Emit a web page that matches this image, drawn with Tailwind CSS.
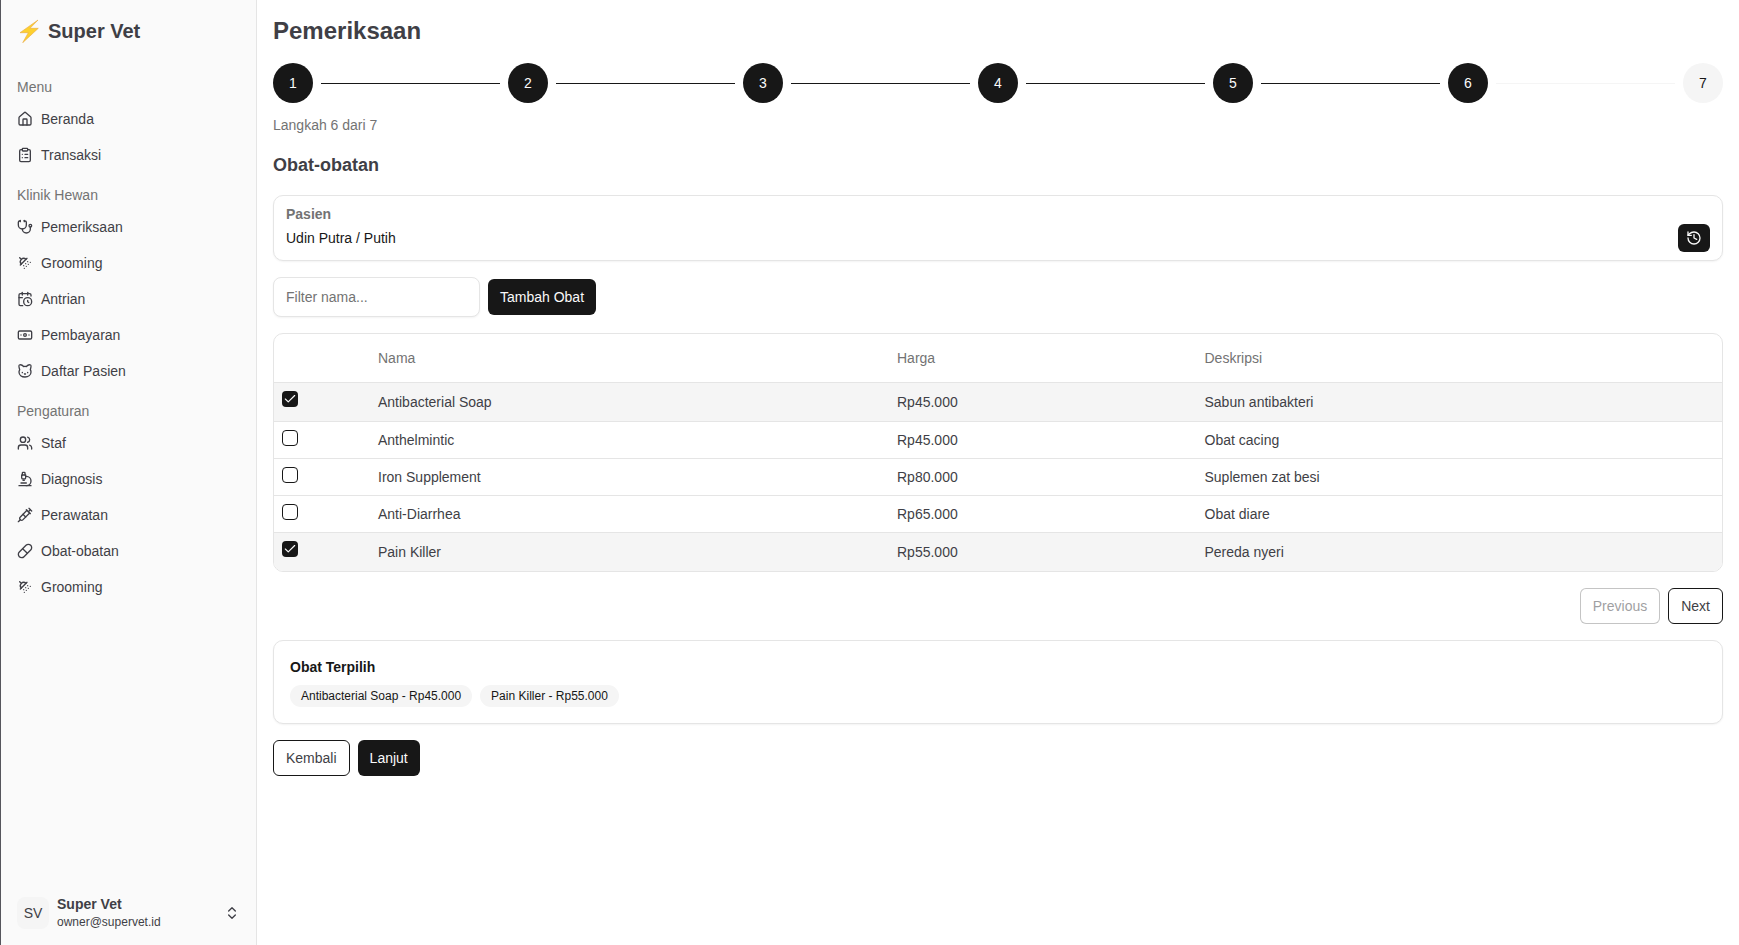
<!DOCTYPE html>
<html lang="en">
  <head>
    <meta charset="UTF-8" />
    <meta name="viewport" content="width=device-width, initial-scale=1.0" />
    <title>Super Vet - Pemeriksaan</title>
    <script src="https://cdn.jsdelivr.net/npm/@tailwindcss/browser@4"></script>
  </head>
  <body class="bg-white font-['Liberation_Sans',Arial,sans-serif] text-[#3f3f46]">
    <div class="flex h-[945px] overflow-hidden">
      <!-- sidebar -->
      <aside class="flex w-[257px] shrink-0 flex-col border-l border-r border-l-[#55555c] border-r-[#e5e5e5] bg-[#fafafa] pl-4 pr-2">
        <div class="flex h-[28px] mt-[17px] items-center gap-[6px] text-xl font-bold">
          <svg class="ml-px size-[24px]" viewBox="0 0 24 24">
            <polygon fill="#fdd02f" stroke="#e9a83f" stroke-width=".6" stroke-linejoin="round" points="20,1 2,13.7 10.3,13.7 4.7,23.7 20.3,9.3 12,9.3" />
          </svg>
          <span>Super Vet</span>
        </div>

        <p class="mt-[32px] h-[20px] text-sm leading-5 text-[#737373]">Menu</p>
        <nav class="mt-[4px] text-sm">
          <a class="flex h-[36px] items-center gap-2">
            <svg class="size-4" viewBox="0 0 24 24" fill="none" stroke="currentColor" stroke-width="2" stroke-linecap="round" stroke-linejoin="round"><path d="M15 21v-8a1 1 0 0 0-1-1h-4a1 1 0 0 0-1 1v8" /><path d="M3 10a2 2 0 0 1 .709-1.528l7-5.999a2 2 0 0 1 2.582 0l7 5.999A2 2 0 0 1 21 10v9a2 2 0 0 1-2 2H5a2 2 0 0 1-2-2z" /></svg>
            Beranda
          </a>
          <a class="flex h-[36px] items-center gap-2">
            <svg class="size-4" viewBox="0 0 24 24" fill="none" stroke="currentColor" stroke-width="2" stroke-linecap="round" stroke-linejoin="round"><rect width="8" height="4" x="8" y="2" rx="1" /><path d="M16 4h2a2 2 0 0 1 2 2v14a2 2 0 0 1-2 2H6a2 2 0 0 1-2-2V6a2 2 0 0 1 2-2h2" /><path d="M12 11h4" /><path d="M12 16h4" /><path d="M8 11h.01" /><path d="M8 16h.01" /></svg>
            Transaksi
          </a>
        </nav>

        <p class="mt-[12px] h-[20px] text-sm leading-5 text-[#737373]">Klinik Hewan</p>
        <nav class="mt-[4px] text-sm">
          <a class="flex h-[36px] items-center gap-2">
            <svg class="size-4" viewBox="0 0 24 24" fill="none" stroke="currentColor" stroke-width="2" stroke-linecap="round" stroke-linejoin="round"><path d="M11 2v2" /><path d="M5 2v2" /><path d="M5 3H4a2 2 0 0 0-2 2v4a6 6 0 0 0 12 0V5a2 2 0 0 0-2-2h-1" /><path d="M8 15a6 6 0 0 0 12 0v-3" /><circle cx="20" cy="10" r="2" /></svg>
            Pemeriksaan
          </a>
          <a class="flex h-[36px] items-center gap-2">
            <svg class="size-4" viewBox="0 0 24 24" fill="none" stroke="currentColor" stroke-width="2" stroke-linecap="round" stroke-linejoin="round"><path d="m4 4 2.5 2.5" /><path d="M13.5 6.5a4.95 4.95 0 0 0-7 7" /><path d="M15 5 5 15" /><path d="M14 17v.01" /><path d="M10 16v.01" /><path d="M13 13v.01" /><path d="M16 10v.01" /><path d="M11 20v.01" /><path d="M17 14v.01" /><path d="M20 11v.01" /></svg>
            Grooming
          </a>
          <a class="flex h-[36px] items-center gap-2">
            <svg class="size-4" viewBox="0 0 24 24" fill="none" stroke="currentColor" stroke-width="2" stroke-linecap="round" stroke-linejoin="round"><path d="M16 14v2.2l1.6 1" /><path d="M16 2v4" /><path d="M21 7.5V6a2 2 0 0 0-2-2H5a2 2 0 0 0-2 2v14a2 2 0 0 0 2 2h3.5" /><path d="M3 10h5" /><path d="M8 2v4" /><circle cx="16" cy="16" r="6" /></svg>
            Antrian
          </a>
          <a class="flex h-[36px] items-center gap-2">
            <svg class="size-4" viewBox="0 0 24 24" fill="none" stroke="currentColor" stroke-width="2" stroke-linecap="round" stroke-linejoin="round"><rect width="20" height="12" x="2" y="6" rx="2" /><circle cx="12" cy="12" r="2" /><path d="M6 12h.01M18 12h.01" /></svg>
            Pembayaran
          </a>
          <a class="flex h-[36px] items-center gap-2">
            <svg class="size-4" viewBox="0 0 24 24" fill="none" stroke="currentColor" stroke-width="2" stroke-linecap="round" stroke-linejoin="round"><path d="M12 5c.67 0 1.35.09 2 .26 1.78-2 5.03-2.84 6.42-2.26 1.4.58-.42 7-.42 7 .57 1.07 1 2.24 1 3.44C21 17.9 16.97 21 12 21s-9-3-9-7.56c0-1.25.5-2.4 1-3.44 0 0-1.89-6.42-.5-7 1.39-.58 4.72.23 6.5 2.23A9.04 9.04 0 0 1 12 5Z" /><path d="M8 14v.5" /><path d="M16 14v.5" /><path d="M11.25 16.25h1.5L12 17l-.75-.75Z" /></svg>
            Daftar Pasien
          </a>
        </nav>

        <p class="mt-[12px] h-[20px] text-sm leading-5 text-[#737373]">Pengaturan</p>
        <nav class="mt-[4px] text-sm">
          <a class="flex h-[36px] items-center gap-2">
            <svg class="size-4" viewBox="0 0 24 24" fill="none" stroke="currentColor" stroke-width="2" stroke-linecap="round" stroke-linejoin="round"><path d="M16 21v-2a4 4 0 0 0-4-4H6a4 4 0 0 0-4 4v2" /><circle cx="9" cy="7" r="4" /><path d="M22 21v-2a4 4 0 0 0-3-3.87" /><path d="M16 3.13a4 4 0 0 1 0 7.75" /></svg>
            Staf
          </a>
          <a class="flex h-[36px] items-center gap-2">
            <svg class="size-4" viewBox="0 0 24 24" fill="none" stroke="currentColor" stroke-width="2" stroke-linecap="round" stroke-linejoin="round"><path d="M6 18h8" /><path d="M3 22h18" /><path d="M14 22a7 7 0 1 0 0-14h-1" /><path d="M9 14h2" /><path d="M9 12a2 2 0 0 1-2-2V6h6v4a2 2 0 0 1-2 2Z" /><path d="M12 6V3a1 1 0 0 0-1-1H9a1 1 0 0 0-1 1v3" /></svg>
            Diagnosis
          </a>
          <a class="flex h-[36px] items-center gap-2">
            <svg class="size-4" viewBox="0 0 24 24" fill="none" stroke="currentColor" stroke-width="2" stroke-linecap="round" stroke-linejoin="round"><path d="m18 2 4 4" /><path d="m17 7 3-3" /><path d="M19 9 8.7 19.3c-1 1-2.5 1-3.4 0l-.6-.6c-1-1-1-2.5 0-3.4L15 5" /><path d="m9 11 4 4" /><path d="m5 19-3 3" /><path d="m14 4 6 6" /></svg>
            Perawatan
          </a>
          <a class="flex h-[36px] items-center gap-2">
            <svg class="size-4" viewBox="0 0 24 24" fill="none" stroke="currentColor" stroke-width="2" stroke-linecap="round" stroke-linejoin="round"><path d="m10.5 20.5 10-10a4.95 4.95 0 1 0-7-7l-10 10a4.95 4.95 0 1 0 7 7Z" /><path d="m8.5 8.5 7 7" /></svg>
            Obat-obatan
          </a>
          <a class="flex h-[36px] items-center gap-2">
            <svg class="size-4" viewBox="0 0 24 24" fill="none" stroke="currentColor" stroke-width="2" stroke-linecap="round" stroke-linejoin="round"><path d="m4 4 2.5 2.5" /><path d="M13.5 6.5a4.95 4.95 0 0 0-7 7" /><path d="M15 5 5 15" /><path d="M14 17v.01" /><path d="M10 16v.01" /><path d="M13 13v.01" /><path d="M16 10v.01" /><path d="M11 20v.01" /><path d="M17 14v.01" /><path d="M20 11v.01" /></svg>
            Grooming
          </a>
        </nav>

        <div class="mt-auto mb-[15px] flex items-start">
          <div class="mt-[2px] flex size-[32px] items-center justify-center rounded-lg bg-[#f5f5f5] text-sm">SV</div>
          <div class="ml-[8px] flex-1">
            <p class="text-sm leading-[18px] font-semibold">Super Vet</p>
            <p class="mt-px text-xs leading-[16px]">owner@supervet.id</p>
          </div>
          <svg class="mr-[8px] size-[16px] self-center" viewBox="0 0 24 24" fill="none" stroke="currentColor" stroke-width="2" stroke-linecap="round" stroke-linejoin="round"><path d="m7 15 5 5 5-5" /><path d="m7 9 5-5 5 5" /></svg>
        </div>
      </aside>

      <!-- content -->
      <main class="flex-1 px-4">
        <h1 class="mt-[15px] text-2xl font-bold">Pemeriksaan</h1>

        <div class="mt-4 flex text-sm font-medium">
          <span class="flex size-[40px] shrink-0 items-center justify-center rounded-full bg-[#171717] text-[#fafafa]">1</span>
          <span class="mx-2 mt-[20px] h-px flex-1 bg-[#171717]"></span>
          <span class="flex size-[40px] shrink-0 items-center justify-center rounded-full bg-[#171717] text-[#fafafa]">2</span>
          <span class="mx-2 mt-[20px] h-px flex-1 bg-[#171717]"></span>
          <span class="flex size-[40px] shrink-0 items-center justify-center rounded-full bg-[#171717] text-[#fafafa]">3</span>
          <span class="mx-2 mt-[20px] h-px flex-1 bg-[#171717]"></span>
          <span class="flex size-[40px] shrink-0 items-center justify-center rounded-full bg-[#171717] text-[#fafafa]">4</span>
          <span class="mx-2 mt-[20px] h-px flex-1 bg-[#171717]"></span>
          <span class="flex size-[40px] shrink-0 items-center justify-center rounded-full bg-[#171717] text-[#fafafa]">5</span>
          <span class="mx-2 mt-[20px] h-px flex-1 bg-[#171717]"></span>
          <span class="flex size-[40px] shrink-0 items-center justify-center rounded-full bg-[#171717] text-[#fafafa]">6</span>
          <span class="mx-2 mt-[20px] h-px flex-1 bg-[#f5f5f5]"></span>
          <span class="flex size-[40px] shrink-0 items-center justify-center rounded-full bg-[#f5f5f5] text-[#171717]">7</span>
        </div>

        <p class="mt-3 text-sm text-[#737373]">Langkah 6 dari 7</p>
        <h2 class="mt-4 text-lg font-semibold">Obat-obatan</h2>

        <!-- pasien -->
        <div class="mt-4 flex h-[66px] items-end justify-between rounded-[10px] border border-[#e5e5e5] bg-white px-3 pb-2 shadow-xs">
          <div class="self-start pt-[8px]">
            <p class="text-sm leading-5 font-semibold text-[#737373]">Pasien</p>
            <p class="mt-1 text-sm leading-5 text-[#171717]">Udin Putra / Putih</p>
          </div>
          <button class="flex h-[28px] w-[32px] items-center justify-center rounded-md bg-[#171717] text-[#fafafa]">
            <svg class="size-[16px]" viewBox="0 0 24 24" fill="none" stroke="currentColor" stroke-width="2" stroke-linecap="round" stroke-linejoin="round"><path d="M3 12a9 9 0 1 0 9-9 9.75 9.75 0 0 0-6.74 2.74L3 8" /><path d="M3 3v5h5" /><path d="M12 7v5l4 2" /></svg>
          </button>
        </div>

        <!-- filter -->
        <div class="mt-4 flex items-center gap-2">
          <input class="h-[40px] w-[207px] rounded-lg border border-[#e5e5e5] bg-white px-3 text-sm shadow-xs placeholder:text-[#737373]" placeholder="Filter nama..." />
          <button class="h-[36px] rounded-md bg-[#171717] px-3 text-sm font-medium text-[#fafafa]">Tambah Obat</button>
        </div>

        <!-- tabel obat -->
        <div class="mt-4 overflow-hidden rounded-[10px] border border-[#e5e5e5]">
          <table class="w-full table-fixed border-collapse text-sm">
            <colgroup>
              <col class="w-[96px]" />
              <col class="w-[519px]" />
              <col class="w-[307.5px]" />
              <col />
            </colgroup>
            <thead>
              <tr class="h-[48px] border-b border-[#e5e5e5] text-left text-[#737373]">
                <th></th>
                <th class="px-2 font-normal">Nama</th>
                <th class="px-2 font-normal">Harga</th>
                <th class="px-2 font-normal">Deskripsi</th>
              </tr>
            </thead>
            <tbody>
              <tr class="h-[39px] border-b border-[#e5e5e5] bg-[#f5f5f5]">
                <td class="px-2 pt-[8px] align-top">
                  <span class="flex size-[16px] items-center justify-center rounded-[4px] bg-[#171717] text-[#fafafa]">
                    <svg class="size-[14px]" viewBox="0 0 24 24" fill="none" stroke="currentColor" stroke-width="2" stroke-linecap="round" stroke-linejoin="round"><path d="M20 6 9 17l-5-5" /></svg>
                  </span>
                </td>
                <td class="px-2">Antibacterial Soap</td>
                <td class="px-2">Rp45.000</td>
                <td class="px-2">Sabun antibakteri</td>
              </tr>
              <tr class="h-[37px] border-b border-[#e5e5e5]">
                <td class="px-2 pt-[8px] align-top"><span class="block size-[16px] rounded-[4px] border border-[#171717] bg-white"></span></td>
                <td class="px-2">Anthelmintic</td>
                <td class="px-2">Rp45.000</td>
                <td class="px-2">Obat cacing</td>
              </tr>
              <tr class="h-[37px] border-b border-[#e5e5e5]">
                <td class="px-2 pt-[8px] align-top"><span class="block size-[16px] rounded-[4px] border border-[#171717] bg-white"></span></td>
                <td class="px-2">Iron Supplement</td>
                <td class="px-2">Rp80.000</td>
                <td class="px-2">Suplemen zat besi</td>
              </tr>
              <tr class="h-[37px] border-b border-[#e5e5e5]">
                <td class="px-2 pt-[8px] align-top"><span class="block size-[16px] rounded-[4px] border border-[#171717] bg-white"></span></td>
                <td class="px-2">Anti-Diarrhea</td>
                <td class="px-2">Rp65.000</td>
                <td class="px-2">Obat diare</td>
              </tr>
              <tr class="h-[39px] bg-[#f5f5f5]">
                <td class="px-2 pt-[8px] align-top">
                  <span class="flex size-[16px] items-center justify-center rounded-[4px] bg-[#171717] text-[#fafafa]">
                    <svg class="size-[14px]" viewBox="0 0 24 24" fill="none" stroke="currentColor" stroke-width="2" stroke-linecap="round" stroke-linejoin="round"><path d="M20 6 9 17l-5-5" /></svg>
                  </span>
                </td>
                <td class="px-2">Pain Killer</td>
                <td class="px-2">Rp55.000</td>
                <td class="px-2">Pereda nyeri</td>
              </tr>
            </tbody>
          </table>
        </div>

        <div class="mt-4 flex justify-end gap-2 text-sm">
          <button class="h-[36px] rounded-md border border-[#171717]/50 bg-white px-3 font-medium opacity-50">Previous</button>
          <button class="h-[36px] rounded-md border border-[#171717] bg-white px-3 font-medium">Next</button>
        </div>

        <!-- obat terpilih -->
        <div class="mt-4 h-[84px] rounded-[10px] border border-[#e5e5e5] bg-white px-4 pt-[16px] shadow-xs">
          <p class="text-sm leading-5 font-semibold text-[#171717]">Obat Terpilih</p>
          <div class="mt-[8px] flex gap-2">
            <span class="flex h-[22px] items-center rounded-full bg-[#f5f5f5] px-[11px] text-xs text-[#171717]">Antibacterial Soap - Rp45.000</span>
            <span class="flex h-[22px] items-center rounded-full bg-[#f5f5f5] px-[11px] text-xs text-[#171717]">Pain Killer - Rp55.000</span>
          </div>
        </div>

        <div class="mt-4 flex gap-2 text-sm">
          <button class="h-[36px] rounded-md border border-[#171717] bg-white px-3 font-medium">Kembali</button>
          <button class="h-[36px] rounded-md bg-[#171717] px-3 font-medium text-[#fafafa]">Lanjut</button>
        </div>
      </main>
    </div>
  </body>
</html>
